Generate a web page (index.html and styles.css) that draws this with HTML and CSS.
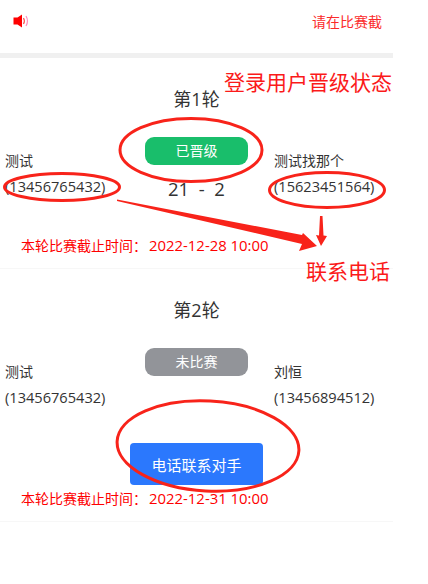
FILE: index.html
```html
<!DOCTYPE html>
<html lang="zh">
<head>
<meta charset="utf-8">
<title>比赛</title>
<link rel="stylesheet" href="styles.css">
</head>
<body>
<div class="page">
  <header class="notice">
    <svg class="speaker" width="17" height="14" viewBox="0 0 17 14">
      <path d="M0.500 3.500H4.500L9 0.500V13.500L4.500 10.500H0.500Z" fill="#fe0000"/>
      <path d="M10.500 4Q12.300 7 10.500 10" fill="none" stroke="#fe5050" stroke-width="1.200"/>
      <path d="M13 2Q16 7 13 12" fill="none" stroke="#ff8fc0" stroke-width="1.200"/>
    </svg>
    <span class="notice-text">请在比赛截</span>
  </header>
  <section class="round">
    <h2 class="round-title">第1轮</h2>
    <div class="match">
      <div class="player">
        <div>测试</div>
        <div class="phone">(13456765432)</div>
      </div>
      <div class="middle">
        <div class="pill pill-green">已晋级</div>
        <div class="score">21&nbsp; -&nbsp; 2</div>
      </div>
      <div class="player">
        <div>测试找那个</div>
        <div class="phone">(15623451564)</div>
      </div>
    </div>
    <div class="deadline">本轮比赛截止时间：<span class="date">2022-12-28 10:00</span></div>
  </section>
  <section class="round">
    <h2 class="round-title">第2轮</h2>
    <div class="match">
      <div class="player">
        <div>测试</div>
        <div class="phone">(13456765432)</div>
      </div>
      <div class="middle">
        <div class="pill pill-gray">未比赛</div>
        <div class="score score-empty">-</div>
      </div>
      <div class="player">
        <div>刘恒</div>
        <div class="phone">(13456894512)</div>
      </div>
    </div>
    <div class="action"><button class="call-btn">电话联系对手</button></div>
    <div class="deadline deadline-tight">本轮比赛截止时间：<span class="date">2022-12-31 10:00</span></div>
  </section>
</div>
<svg class="marks" width="428" height="584" viewBox="0 0 428 584">
  <g fill="none" stroke="#f8231a" stroke-width="3">
    <ellipse cx="191" cy="150" rx="71" ry="31.5"/>
    <ellipse cx="62" cy="187" rx="57.5" ry="13.5"/>
    <ellipse cx="327" cy="190" rx="57.5" ry="17.5"/>
    <ellipse cx="208" cy="446" rx="91" ry="45" transform="rotate(3 208 446)"/>
  </g>
  <path d="M117 199.500L302 235L303 233L317 246L299 251L302 244L117 201Z" fill="#f8231a"/>
  <path d="M320 216H322.500L323.500 235.500L327 236L321 246L316 235L319 235.500Z" fill="#f8231a"/>
</svg>
<div class="note note-status">登录用户晋级状态</div>
<div class="note note-phone">联系电话</div>
</body>
</html>
```
FILE: styles.css
```css
* { box-sizing: border-box; }
html, body { margin: 0; padding: 0; background: #fff; }
body {
  position: relative;
  width: 428px;
  height: 584px;
  overflow: hidden;
  font-family: "Open Sans", "Noto Sans CJK SC", sans-serif;
  color: #333;
}
.page { width: 393px; }
.notice {
  height: 53px;
  display: flex;
  justify-content: space-between;
  padding: 14px 11px 0 13px;
  align-items: flex-start;
}
.notice-text { font-size: 14px; line-height: 16px; color: #fb2b2b; }
.round {
  padding-top: 27px;
  border-top: 5px solid #f0f0f0;
}
.round + .round { border-top: 1px solid #f7f7f7; }
.round:last-child { border-bottom: 1px solid #f7f7f7; }
.round-title {
  margin: 0;
  font-size: 18px;
  font-weight: 400;
  line-height: 28px;
  text-align: center;
}
.match {
  display: grid;
  grid-template-columns: 140px 103px 1fr;
  padding-left: 5px;
  margin-top: 24px;
}
.match .player:last-child { padding-left: 26px; }
.player {
  padding-top: 11px;
  font-size: 14px;
  line-height: 25px;
  white-space: nowrap;
}
.phone { font-size: 14.6px; line-height: 27px; }
.middle { text-align: center; }
.pill {
  height: 28px;
  border-radius: 9px;
  font-size: 14px;
  line-height: 28px;
  color: #fff;
}
.pill-green { background: #19be6b; }
.pill-gray { background: #929499; }
.score { margin-top: 11px; font-size: 18.5px; line-height: 26px; white-space: nowrap; }
.score-empty { font-size: 14px; }
.deadline {
  margin-top: 31px;
  padding: 0 0 10px 21px;
  font-size: 14px;
  line-height: 24px;
  color: #fe0000;
}
.date { font-size: 14.9px; margin-left: 2px; }
.deadline-tight { margin-top: 1px; }
.action { display: flex; justify-content: center; margin-top: 30px; }
.call-btn {
  width: 133px;
  height: 42px;
  border: 0;
  border-radius: 4px;
  background: #2b78fd;
  color: #fff;
  font: inherit;
  font-size: 15px;
  padding: 0;
}
.marks { position: absolute; left: 0; top: 0; pointer-events: none; }
.note {
  position: absolute;
  font-size: 21px;
  line-height: 28px;
  color: #fb1a1a;
  white-space: nowrap;
}
.note-status { left: 224px; top: 68px; }
.note-phone { left: 306px; top: 257px; }
```
